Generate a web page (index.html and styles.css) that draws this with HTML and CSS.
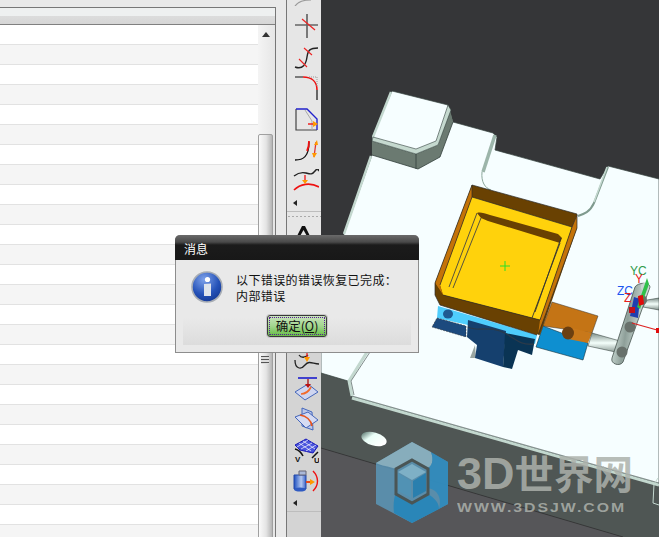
FILE: index.html
```html
<!DOCTYPE html>
<html lang="zh-CN">
<head>
  <meta charset="UTF-8">
  <title>NX</title>
  <link rel="stylesheet" href="styles.css">
</head>
<body>
  <div class="janela">
    <!-- painel esquerdo -->
    <div class="coluna-lista">
      <div class="lista">
        <div class="lista-cab"></div>
        <div class="lista-corpo">
          <div class="linhas" id="linhas"></div>
          <div class="rolagem">
            <svg class="seta-cima" width="8" height="5" viewBox="0 0 8 5"><path d="M0 5 4 0 8 5z" fill="#333"/></svg>
            <div class="polegar">
              <div class="polegar-marca"></div>
            </div>
          </div>
        </div>
      </div>
    </div>

    <!-- barra de icones -->
    <div class="barra">
      <svg class="ico m8" width="30" height="6" viewBox="0 0 30 6"><path d="M6 6C9 2 14 0 22 0" fill="none" stroke="#999" stroke-width="1.2"/></svg>
      <svg class="ico m8" width="30" height="24" viewBox="0 0 30 24"><path d="M18 0V24M6 11H29" stroke="#666" stroke-width="1.7"/><path d="M13 5 26 16" stroke="#e22" stroke-width="1.2"/></svg>
      <svg class="ico m6" width="30" height="24" viewBox="0 0 30 24"><path d="M6 21C14 24 17 18 18 11S21 2 29 2" fill="none" stroke="#222" stroke-width="1.4"/><path d="M15 2 23 9M10 13 18 21" stroke="#e22" stroke-width="1.1"/></svg>
      <svg class="ico m7" width="30" height="24" viewBox="0 0 30 24"><path d="M6 1H14M28 14V24" stroke="#111" stroke-width="1.2"/><path d="M14 1C23 1 28 6 28 14" fill="none" stroke="#e11" stroke-width="1.6"/><path d="M20 1H28V10" fill="none" stroke="#999" stroke-dasharray="1 1"/></svg>
      <svg class="ico m8" width="30" height="24" viewBox="0 0 30 24"><path d="M7 2V23H28" fill="none" stroke="#444" stroke-width="1.2"/><path d="M7 2H18L28 12V23" fill="none" stroke="#22c" stroke-width="1.4"/><path d="M16 3 23 14V23" fill="none" stroke="#aaa"/><path d="M19 17H27" stroke="#e22" stroke-width="1.5"/><path d="M24 14 29 17 24 20z" fill="#f90"/></svg>
      <svg class="ico m8" width="30" height="22" viewBox="0 0 30 22"><path d="M6 21C14 21 20 18 20 3" fill="none" stroke="#111" stroke-width="1.3"/><path d="M18 12C20 8 20 5 20 2" fill="none" stroke="#e11" stroke-width="1.8"/><path d="M27 3 25 18" stroke="#d33" stroke-width="1.3"/><path d="M25 6 28 1 29 6zM23 14 28 14 25 19z" fill="#f90"/></svg>
      <svg class="ico m9" width="30" height="22" viewBox="0 0 30 22"><path d="M5 7C10 3 13 3 17 4S23 6 26 2 30 1 29 2" fill="none" stroke="#222" stroke-width="1.4"/><path d="M5 21C11 15 21 13 30 18" fill="none" stroke="#e11" stroke-width="1.6"/><path d="M16 6V12" stroke="#e22" stroke-width="1.4"/><path d="M13 11H19L16 15z" fill="#f90"/></svg>
      <svg class="ponta" width="4" height="6" viewBox="0 0 4 6"><path d="M4 0V6L0 3z" fill="#222"/></svg>
      <div class="pontilhado"></div>
      <svg class="ico" width="30" height="12" viewBox="0 0 30 12"><path d="M7 12 13 0H16L22 12H19L14.500 4 10 12z" fill="#111"/></svg>

      <div class="barra-meio"></div>

      <svg class="ico m7" width="30" height="24" viewBox="0 0 30 24"><path d="M6 14C6 23 12 24 16 19S24 18 30 18M10 9C12 12 16 12 19 9" fill="none" stroke="#222" stroke-width="1.3"/><path d="M18 6V13" stroke="#e22" stroke-width="1.3"/><path d="M15 11H21L18 16z" fill="#f90"/></svg>
      <svg class="ico m6" width="30" height="24" viewBox="0 0 30 24"><path d="M6 15 19 7 29 15 16 23z" fill="#cfd6f0" stroke="#4466bb"/><path d="M12 17C17 17 20 14 22 10" fill="none" stroke="#f26a2a" stroke-width="1.7"/><path d="M9 1H28" stroke="#11c" stroke-width="1.5"/><path d="M19 2V9" stroke="#a11" stroke-width="1.3"/><path d="M16 7H22L19 11z" fill="#b11"/></svg>
      <svg class="ico m7" width="30" height="24" viewBox="0 0 30 24"><path d="M13 1 23 5 24 23 13 19z" fill="#bcc8ea" stroke="#4466bb"/><path d="M6 10 19 5 29 13 17 21z" fill="#d5dbf3" stroke="#4466bb"/><path d="M11 8C17 9 22 13 23 19" fill="none" stroke="#e8541e" stroke-width="1.7"/></svg>
      <svg class="ico m6" width="30" height="26" viewBox="0 0 30 26"><path d="M6 7 17 1 29 8 24 15 11 12z" fill="#4a55dd" stroke="#1818b8"/><path d="M10 5 22 13M14 3 26 11M8 9 19 2M12 11 23 5M17 13 27 7" stroke="#fff" stroke-width=".7"/><path d="M6 11C10 12 12 14 14 18M29 14 23 20" fill="none" stroke="#111" stroke-width="1.5"/><text class="uv" x="6" y="24">V</text><text class="uv" x="25" y="25">U</text></svg>
      <svg class="ico m8" width="30" height="22" viewBox="0 0 30 22"><defs><linearGradient id="cil"><stop offset="0" stop-color="#1d4fc0"/><stop offset=".6" stop-color="#b4c8f0"/><stop offset="1" stop-color="#3a62c8"/></linearGradient></defs><path d="M5 5H17V19H5z" fill="url(#cil)" stroke="#2448a8"/><ellipse cx="11" cy="19.500" rx="6" ry="2" fill="#2f5ac2"/><path d="M10 1H17V5H10z" fill="#aab8d8" stroke="#667"/><path d="M17 12H24" stroke="#ea4a1a" stroke-width="2"/><path d="M21 9 26 12 21 15z" fill="#f90"/><path d="M24 1C30 7 30 15 24 21" fill="none" stroke="#e11" stroke-width="1.4"/></svg>
      <svg class="ponta" width="4" height="6" viewBox="0 0 4 6"><path d="M4 0V6L0 3z" fill="#222"/></svg>
      <div class="barra-fim"></div>
    </div>

    <!-- area grafica -->
    <div class="viewport">
      <svg class="cena" width="338" height="537" viewBox="321 0 338 537">
        <defs>
          <linearGradient id="furo" x1="0" x2="1" y1="0" y2=".4"><stop offset="0" stop-color="#3b5a52"/><stop offset=".45" stop-color="#eafff8"/><stop offset="1" stop-color="#fff"/></linearGradient>
          <linearGradient id="tubo" x1="0" x2="0" y1="0" y2="1"><stop offset="0" stop-color="#7e8f8a"/><stop offset=".5" stop-color="#f4fffb"/><stop offset="1" stop-color="#84938e"/></linearGradient>
          <linearGradient id="tubo-v" x1="0" x2="1" y1="0" y2=".3"><stop offset="0" stop-color="#f2fffa"/><stop offset=".5" stop-color="#8e9f99"/><stop offset="1" stop-color="#e8f6f1"/></linearGradient>
        </defs>
        <!-- lateral da placa -->
        <path d="M321 360 659 470V537H623L321 448z" fill="#4f5654"/>
        <path d="M321 448 623 537H321z" fill="#565659"/>
        <path d="M321 448 623 537" stroke="#2a2a2a" stroke-width=".6"/>
        <ellipse cx="374" cy="439" rx="13" ry="6.500" fill="url(#furo)" transform="rotate(16 374 439)"/>
        <!-- topo da placa -->
        <path d="M392 91 448 105 453 122 493 133 497 137 495 150 600 179 608 166 659 179V484L352 397 348 381 321 373V298L344 234 372 155V137z" fill="#f6feff" stroke="#33403c" stroke-width=".7"/>
        <path d="M391 92 373 137M371 156 344 234" stroke="#c3d8cf" stroke-width="2.400"/>
        <path d="M372 141 416 154 438 145 450 110 453 122 440 157 418 169 372 155z" fill="#6b7a71"/>
        <path d="M373 137 416 149 436 141 448 105 451 110 438 145 416 154 372 141z" fill="#c5d9cf" stroke="#33403c" stroke-width=".6"/>
        <path d="M372 155 418 169 440 157 453 122M416 154V169" fill="none" stroke="#33403c" stroke-width=".8"/>
        <path d="M495 135 483 172" stroke="#9cb5aa" stroke-width="3.500"/>
        <path d="M482 172C481 182 485 188 491 190" fill="none" stroke="#8ba69b" stroke-width="1"/>
        <path d="M608 167 594 203C590 212 584 214 578 216" fill="none" stroke="#7f9a8e" stroke-width="2"/>
        <path d="M607 167 594 202" stroke="#c3d8cf" stroke-width="1.500"/>
        <path d="M352 398 659 485" stroke="#c3d8cf" stroke-width="3"/>
        <path d="M352 396 659 483" stroke="#33403c" stroke-width=".6"/>
        <path d="M367 352 349 381 352 396" fill="none" stroke="#c3d8cf" stroke-width="3"/>
        <path d="M370 352 351 381 354 395" fill="none" stroke="#33403c" stroke-width=".6"/>
        <path d="M653 503 659 505M654 484 653 503M658 478 654 484" fill="none" stroke="#c3d8cf" stroke-width="1"/>

        <!-- bloco azul e pecas -->
        <path d="M438 306 537 335 535 344 468 325 437 318z" fill="#4fcdfc"/>
        <path d="M437 318 466 326 466 337 432 327z" fill="#1c4a7e" stroke="#2a2a2a" stroke-width=".5" stroke-dasharray="2 1"/>
        <path d="M475 345 470 358 476 358z" fill="#9aa6a2"/>
        <path d="M468 320 506 331 503 367 475 358 477 345 467 337z" fill="#15406e"/>
        <path d="M505 333 535 339 532 355 518 350 512 369 503 367z" fill="#0a3454"/>
        <path d="M468 327C478 332 486 326 500 331S518 346 534 344" fill="none" stroke="#2a3a4a" stroke-width="1.300"/>
        <ellipse cx="448" cy="314" rx="5" ry="4.500" fill="#1f5a91"/>
        <path d="M552 302 598 316 592 333 543 326z" fill="#c47415" stroke="#333" stroke-width=".5"/>
        <path d="M543 326 588 343 583 360 536 347z" fill="#0e8fd0" stroke="#15303a" stroke-width=".6"/>
        <path d="M568 327 592 333 588 343 568 339z" fill="#c8781a"/>
        <ellipse cx="568" cy="333" rx="6" ry="6.500" fill="#6b3f10"/>
        <!-- tubos -->
        <path d="M592 333 620 341 620 353 588 346z" fill="url(#tubo)" stroke="#25302c" stroke-width=".5"/>
        <path d="M647 300 659 298V310L643 307z" fill="url(#tubo)" stroke="#25302c" stroke-width=".5"/>
        <path d="M635 287C638 282 650 282 650 287L623 362C620 367 610 364 612 358z" fill="url(#tubo-v)" stroke="#33403c" stroke-width=".7"/>
        <circle cx="622" cy="352" r="5.500" fill="#68716c"/>
        <circle cx="630" cy="327" r="5.500" fill="#68716c"/>
        <circle cx="642" cy="300" r="5" fill="#68716c"/>
        <circle cx="645" cy="287" r="4" fill="#c7d6d0"/>

        <!-- caixa amarela -->
        <path d="M472 185 577 214 577 228 540 335 435 295 435 283z" fill="#694102"/>
        <path d="M472 197 572 227 540 320 443 295 440 285z" fill="#ffd20c"/>
        <path d="M472 185 435 283 443 295 440 285 472 197z" fill="#c47308"/>
        <path d="M435 283 443 295 540 320 537 335 440 305 435 295z" fill="#694102"/>
        <path d="M577 214 577 228 538 335 540 320 572 227z" fill="#c47308"/>
        <path d="M472 185 577 214 577 228 538 335M435 283 472 185V197M472 197 572 227M443 295 540 320 572 227M440 285 472 197M577 215 572 227M537 335 440 305 435 295V283" fill="none" stroke="#2b2b2b" stroke-width=".7"/>
        <path d="M477 213C480 212 484 213 490 215L558 234 562 238 560 243 488 221 481 218z" fill="#694102"/>
        <path d="M477 213 449 287M481 218 453 288" fill="none" stroke="#444" stroke-width=".9"/>
        <path d="M560 243 532 318M561 238 535 312" fill="none" stroke="#333" stroke-width=".9"/>
        <path d="M500 266H510M505 261V271" stroke="#28e028" stroke-width="1"/>

        <!-- triedro -->
        <path d="M634 297 640 299 638 318 630 316z" fill="#1f3fb0"/>
        <path d="M647 278 649 284 640 309 637 307z" fill="#2fc04a"/>
        <path d="M638 296 643 295 644 304 639 306z" fill="#e00b0b"/>
        <path d="M629 307H635V313H629z" fill="#c1101c"/>
        <path d="M632 323 657 330" stroke="#d22" stroke-width="1.200"/>
        <path d="M656 328H659V333H656z" fill="#e00b0b"/>
        <text class="eixo eixo-yc" x="630" y="275">YC</text>
        <text class="eixo eixo-y" x="635" y="283">Y</text>
        <text class="eixo eixo-zc" x="617" y="295">ZC</text>
        <text class="eixo eixo-z" x="624" y="302">Z</text>
      </svg>

      <!-- marca d'agua -->
      <div class="marca">
        <svg class="marca-logo" width="73" height="82" viewBox="0 0 73 82">
          <path d="M36 0 72 20V62L36 81 0 62V21z" fill="#5a97b8" fill-opacity=".85"/>
          <path d="M36 0 55 10C58 18 56 24 52 26L36 18 20 27C12 24 6 24 0 21z" fill="#8fb3c0" fill-opacity=".85"/>
          <path d="M55 10 72 20V62L63 67C66 56 62 48 52 46V26C56 24 58 18 55 10z" fill="#2f8abb" fill-opacity=".9"/>
          <path d="M36 81 18 71C17 62 18 56 20 50L36 61 52 52C58 56 63 60 63 67z" fill="#2a86b8"/>
          <path d="M36 18 52 27V52L36 61 20 52V27z" fill="none" stroke="#4a5555" stroke-width="3"/>
          <path d="M36 22 50 30 36 38 22 30z" fill="#7eb0c6"/>
          <path d="M22 31 35 39V56L22 49z" fill="#5192b4"/>
          <path d="M50 31V49L37 56V39z" fill="#2a7fae"/>
        </svg>
        <div class="marca-texto">
          <div class="marca-nome"><span class="marca-3d">3D</span>世界网</div>
          <div class="marca-url">WWW.3DSJW.COM</div>
        </div>
      </div>
    </div>

    <!-- caixa de mensagem -->
    <div class="dialogo">
      <div class="dialogo-titulo">消息</div>
      <div class="dialogo-corpo">
        <div class="dialogo-msg">
          <svg class="info" width="32" height="32" viewBox="0 0 32 32">
            <defs><radialGradient id="esfera" cx=".4" cy=".25" r=".9"><stop offset="0" stop-color="#7ea2ea"/><stop offset=".55" stop-color="#2552b8"/><stop offset="1" stop-color="#0e2f86"/></radialGradient></defs>
            <circle cx="16" cy="16" r="15" fill="url(#esfera)" stroke="#a8adb4" stroke-width="1.600"/>
            <circle cx="16.500" cy="8.500" r="2.600" fill="#fff"/>
            <path d="M13 13 20 12.500V25H13z" fill="#dfe4ec"/>
          </svg>
          <div class="dialogo-texto">
            <div>以下错误的错误恢复已完成：</div>
            <div>内部错误</div>
          </div>
        </div>
        <div class="dialogo-rodape">
          <div class="botao">确定(<u>O</u>)</div>
        </div>
      </div>
    </div>
  </div>

  <script>
    // linhas da lista
    const linhas = document.getElementById('linhas');
    for (let i = 0; i < 26; i++) {
      const linha = document.createElement('div');
      linha.className = i % 2 ? 'linha par' : 'linha';
      linhas.appendChild(linha);
    }
  </script>
</body>
</html>
```

FILE: styles.css
```css
html, body {
  margin: 0;
  padding: 0;
  height: 100%;
  overflow: hidden;
}

body {
  font-family: "Noto Sans CJK SC", "Liberation Sans", sans-serif;
  background-color: #e8e8e8;
}

.janela {
  position: relative;
  display: flex;
  width: 659px;
  height: 537px;
  overflow: hidden;
}

/* painel esquerdo */
.coluna-lista {
  width: 287px;
  flex-shrink: 0;
  padding-top: 7px;
  box-sizing: border-box;
  border-right: 1px solid #777;
  background-color: #e9e9e9;
}

.lista {
  width: 276px;
  height: 530px;
  box-sizing: border-box;
  border-top: 1px solid #777;
  border-right: 1px solid #777;
  display: flex;
  flex-direction: column;
}

.lista-cab {
  height: 16px;
  flex-shrink: 0;
  background: linear-gradient(#eef0f0 0, #eef0f0 50%, #dcdcdc 50%, #d6d6d6 100%);
  border-bottom: 1px solid #808080;
}

.lista-corpo {
  flex: 1;
  display: flex;
  overflow: hidden;
}

.linhas {
  width: 258px;
  flex-shrink: 0;
}

.linha {
  height: 19px;
  background-color: #fff;
  border-bottom: 1px solid #e2e2e2;
}

.par {
  background-color: #f5f5f5;
}

.rolagem {
  width: 17px;
  background: linear-gradient(90deg, #f4f4f4, #e6e6e6);
  padding-top: 7px;
  box-sizing: border-box;
}

.seta-cima {
  display: block;
  margin-left: 4px;
}

.polegar {
  width: 15px;
  height: 430px;
  margin-top: 97px;
  box-sizing: border-box;
  border: 1px solid #a0a0a0;
  border-radius: 2px;
  background: linear-gradient(90deg, #fafafa, #e4e4e4 55%, #b5b5b5);
  padding-top: 221px;
}

.polegar-marca {
  width: 8px;
  height: 8px;
  margin-left: 2px;
  background: repeating-linear-gradient(#555 0, #555 1px, #ddd 1px, #ddd 3px);
}

/* barra de icones */
.barra {
  width: 34px;
  flex-shrink: 0;
  box-sizing: border-box;
  background: linear-gradient(#e6e6e6 240px, #d4d4d4 345px);
  display: flex;
  flex-direction: column;
  align-items: center;
}

.ico {
  display: block;
  flex-shrink: 0;
}

.m6 { margin-bottom: 6px; }
.m7 { margin-bottom: 7px; }
.m8 { margin-bottom: 8px; }
.m9 { margin-bottom: 9px; }

.ponta {
  align-self: flex-start;
  margin: 0 0 5px 6px;
  flex-shrink: 0;
}

.pontilhado {
  align-self: stretch;
  height: 6px;
  flex-shrink: 0;
  margin-bottom: 8px;
  border-top: 1px solid #bdbdbd;
  background: radial-gradient(circle, #aaa 0.7px, transparent 0.9px) 4px 3px / 4px 3px repeat-x;
}

.barra-meio {
  height: 108px;
  flex-shrink: 0;
}

.barra-fim {
  align-self: stretch;
  flex: 1;
  border-top: 1px solid #bdbdbd;
}

.uv {
  font-family: "Liberation Sans", sans-serif;
  font-size: 8px;
  font-weight: bold;
  fill: #111;
}

/* area grafica */
.viewport {
  position: relative;
  flex: 1;
  background-color: #353638;
}

.cena {
  display: block;
}

.eixo {
  font-family: "Liberation Sans", sans-serif;
  font-size: 12px;
}

.eixo-yc {
  fill: #2f9a4a;
}

.eixo-y, .eixo-z {
  fill: #e82020;
}

.eixo-zc {
  fill: #1a56f0;
}

.marca {
  position: absolute;
  left: 55px;
  top: 442px;
  display: flex;
  align-items: flex-start;
  gap: 8px;
}

.marca-logo {
  display: block;
}

.marca-texto {
  margin-top: 7px;
  color: rgba(172, 177, 171, 0.85);
  white-space: nowrap;
}

.marca-nome {
  font-size: 39.5px;
  line-height: 46px;
  font-weight: 700;
}

.marca-3d {
  font-family: "Liberation Sans", sans-serif;
  font-size: 45px;
}

.marca-url {
  font-family: "Liberation Sans", sans-serif;
  font-size: 12px;
  line-height: 12px;
  margin-top: 5px;
  font-weight: 700;
  letter-spacing: 1.5px;
  transform: scaleX(1.32);
  transform-origin: left;
}

/* caixa de mensagem */
.dialogo {
  position: absolute;
  left: 175px;
  top: 235px;
  width: 244px;
  height: 118px;
  box-sizing: border-box;
  border: 1px solid #8d8d8d;
  border-top: none;
  border-radius: 5px 5px 0 0;
  background-color: #e9e9e9;
}

.dialogo-titulo {
  height: 25px;
  margin: 0 -1px;
  padding-left: 9px;
  border-radius: 5px 5px 0 0;
  background: linear-gradient(#6a6a6a 0, #4a4a4a 28%, #1b1b1b 40%, #181818 100%);
  color: #fff;
  font-size: 12px;
  line-height: 27px;
}

.dialogo-corpo {
  padding: 11px 7px 0;
}

.dialogo-msg {
  display: flex;
  align-items: flex-start;
  height: 47px;
  padding-left: 8px;
}

.info {
  flex-shrink: 0;
}

.dialogo-texto {
  margin-left: 13px;
  margin-top: 1px;
  color: #111;
  font-size: 12px;
  letter-spacing: 0.4px;
  line-height: 16px;
  white-space: nowrap;
}

.dialogo-rodape {
  height: 27px;
  display: flex;
  justify-content: center;
  align-items: flex-start;
  background: linear-gradient(#e9e9e9, #dcdcdc);
}

.botao {
  width: 60px;
  height: 22px;
  margin-top: -3px;
  box-sizing: border-box;
  border: 1px solid #3a3a3a;
  border-radius: 3px;
  box-shadow: 0 0 0 1px #c8c8c8;
  background: linear-gradient(#c8e4bc, #a3d68f 50%, #66bd44);
  font-size: 12.5px;
  line-height: 19px;
  text-align: center;
  color: #111;
  outline: 1px dotted #5a1a9a;
  outline-offset: -3px;
}
```
